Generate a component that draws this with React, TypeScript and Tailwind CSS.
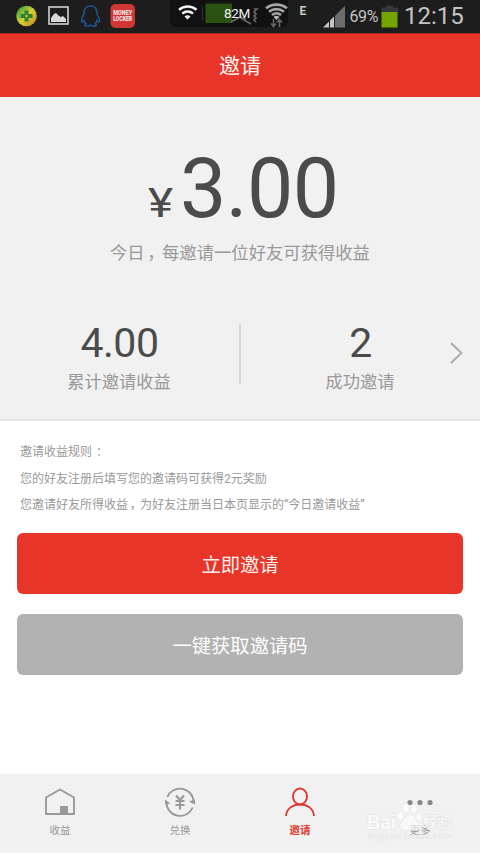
import type { ReactNode } from "react";
import clsx from "clsx";

const RULES = [
  <>邀请收益规则<span className="relative left-[4px]">：</span></>,
  <>您的好友注册后填写您的邀请码可获得2元奖励</>,
  <>您邀请好友所得收益<Comma />为好友注册当日本页显示的“今日邀请收益”</>,
];

// full-width comma, nudged to the middle of its cell
function Comma() {
  return <span className="relative left-[0.15em]">，</span>;
}

function StatusBar() {
  return (
    <div className="relative flex h-[33px] shrink-0 items-center bg-[#1d1d1d] text-[#c4c4c4]">
      <svg width="480" height="33" viewBox="0 0 480 33" fill="none">
        <defs>
          <linearGradient id="ball" x1="0" y1="0" x2="1" y2="1">
            <stop offset="0.2" stopColor="#5fae35" />
            <stop offset="0.5" stopColor="#d9cf35" />
            <stop offset="0.85" stopColor="#c99a22" />
          </linearGradient>
        </defs>
        {/* security */}
        <circle cx="26.5" cy="16" r="10.3" fill="url(#ball)" />
        <path d="M24.500 10.500h4v3.500h4v4h-4v3.500h-4v-3.500h-4v-4h4z" fill="#2f8132" />
        <path d="M26.500 14.500v3M25 16h3" stroke="#cfc63a" strokeWidth="1.200" />
        {/* gallery */}
        <rect x="49" y="7" width="19" height="17" stroke="#d2d2d2" strokeWidth="1.6" />
        <path d="M51 22v-4l3-4 2-1 3 3 2 1 2-1 3 3v3z" fill="#d8d8d8" />
        {/* qq */}
        <path
          d="M90.500 6c-4 0-6.300 2.800-6.300 6.500 0 2.500-2.700 5-2.700 8.500 0 1.500 1 1.500 2.500-.5.300 1.500 1 2.300 1.800 3-2 1-1.500 2.700 1.200 2.700 1.500 0 2.500-.4 3.500-1 1 .6 2 1 3.500 1 2.700 0 3.200-1.700 1.200-2.700.8-.7 1.500-1.500 1.800-3 1.500 2 2.500 2 2.500.5 0-3.500-2.700-6-2.700-8.500C96.800 8.800 94.500 6 90.500 6z"
          stroke="#1f5792"
          strokeWidth="1.500"
        />
        {/* money locker */}
        <rect x="110.500" y="4" width="24.500" height="24" rx="5" fill="#cf3634" />
        <text x="122.700" y="15.300" textAnchor="middle" textLength="19" lengthAdjust="spacingAndGlyphs" fill="#f5e4e2" fontFamily="Roboto, sans-serif" fontWeight="900" fontSize="6.500">MONEY</text>
        <text x="122.700" y="21" textAnchor="middle" textLength="19" lengthAdjust="spacingAndGlyphs" fill="#f5e4e2" fontFamily="Roboto, sans-serif" fontWeight="900" fontSize="6.500">LOCKER</text>
        {/* floating memory widget */}
        <rect x="170" y="-6" width="118" height="33" rx="5" fill="#111111" />
        <g stroke="#f2f2f2" strokeWidth="2.500">
          <path d="M179 9.800a13 13 0 0 1 17.500 0" />
          <path d="M182.300 13.600a8 8 0 0 1 10.700 0" />
        </g>
        <path d="M187.500 19.500l-3-3a4.500 4.500 0 0 1 6 0z" fill="#f2f2f2" />
        <path d="M202.500 6v15" stroke="#303030" />
        <rect x="205.500" y="3.500" width="26.500" height="19.500" fill="#2b5210" />
        <path d="M231 22l9-5 4 3 7 4M240 17l6 2M254 8l2 2-2 2 2 2-2 2 2 2-2 2 2 2M258 8l-2 2" stroke="#686868" strokeWidth="1.700" />
        {/* wifi with traffic arrows */}
        <g stroke="#a5a5a5" strokeWidth="2.700">
          <path d="M266 8.300a17 17 0 0 1 21 0" />
          <path d="M269 11.800a12 12 0 0 1 15 0" />
          <path d="M272 15a7 7 0 0 1 9 0" />
        </g>
        <path d="M276.500 20l-3-3a4.500 4.500 0 0 1 6 0z" fill="#b5b5b5" />
        <path d="M273.500 19v7M271 23.500l2.500 3 2.500-3M279.500 27v-7M277 22.500l2.500-3 2.500 3" stroke="#666" strokeWidth="1.600" />
        {/* signal */}
        <path d="M323 27.500l6-6v6zM330 27.500v-7l4-4v11z" fill="#c6c6c6" />
        <path d="M335 27.500V15.800l10-10v21.700z" fill="#6c6c6c" />
        {/* battery */}
        <path d="M386 5.500h7v2h5v5h-16.500v-5h4.500z" fill="#37373b" />
        <rect x="381.500" y="12" width="16" height="15.500" fill="#74a400" />
      </svg>
      <span className="absolute left-[224px] top-[4px] text-[13.500px] leading-[19px] tracking-[-0.3px] text-[#f0f0f0]">82M</span>
      <span className="absolute left-[299.500px] top-[2px] text-[12px] font-bold leading-[18px] text-[#c8c8c8]">E</span>
      <span className="absolute left-[349.500px] top-[6px] text-[16px] leading-[21px] tracking-[-0.4px]">69%</span>
      <span className="absolute left-[404px] top-0 text-[24px] leading-[32px]">12:15</span>
    </div>
  );
}

function Stat({ value, label }: { value: string; label: string }) {
  return (
    <div className="flex w-[239px] flex-col items-center">
      <span className="-mt-[3px] text-[41px] leading-[48px] tracking-[-0.5px] text-[#4b4b4b]">{value}</span>
      <span className="mt-[2px] pr-[1px] text-[17.300px] leading-[26px] text-[#999]">{label}</span>
    </div>
  );
}

function Tab({ label, active, children }: { label: string; active?: boolean; children: ReactNode }) {
  return (
    <button className={clsx("flex flex-1 flex-col items-center pt-[11px]", active ? "font-bold text-[#de3a31]" : "text-[#999]")}>
      <svg width="34" height="34" viewBox="0 0 34 34" fill="none" stroke="currentColor" strokeWidth="1.900">
        {children}
      </svg>
      <span className="mt-[3px] text-[10.500px] leading-[17px]">{label}</span>
    </button>
  );
}

function Watermark() {
  return (
    <svg className="absolute left-[365px] top-[22px]" width="94" height="48" viewBox="0 0 94 48">
      <g fill="#ffffff" fillOpacity="0.8" stroke="#e0e0e0" strokeWidth="0.800" paintOrder="stroke">
        <text x="2" y="33" fontFamily="Liberation Sans, sans-serif" fontWeight="700" fontSize="21" textLength="29" lengthAdjust="spacingAndGlyphs">Bai</text>
        <ellipse cx="35.500" cy="20" rx="3" ry="4" />
        <ellipse cx="41" cy="12" rx="3" ry="4.500" />
        <ellipse cx="49" cy="12.500" rx="3" ry="4.500" />
        <ellipse cx="54" cy="21" rx="2.800" ry="4" />
        <path d="M45 19c-4 0-5 5-8 7-4 3-2 8 2 8h12c4 0 6-5 2-8-3-2-4-7-8-7z" fillOpacity="0.600" />
        <text x="58" y="31" fontFamily="Noto Sans CJK SC, sans-serif" fontWeight="500" fontSize="15" textLength="29" lengthAdjust="spacingAndGlyphs">经验</text>
      </g>
      <text x="3" y="43" fill="#e6e6e6" fontFamily="Liberation Sans, sans-serif" fontSize="9.500" textLength="84">jingyan.baidu.com</text>
    </svg>
  );
}

export default function App() {
  return (
    <div className="flex h-[853px] w-[480px] flex-col overflow-hidden bg-white font-['Roboto','Noto_Sans_CJK_SC',sans-serif]">
      <StatusBar />

      {/* Header */}
      <header className="flex h-[64px] shrink-0 items-center justify-center border-t border-[#a82a20] bg-[#e83529] pt-[2px] text-[21px] text-[#fff3f0]">
        邀请
      </header>

      {/* Earnings */}
      <section className="flex h-[324px] shrink-0 flex-col items-center border-b-2 border-[#e4e4e4] bg-[#f1f1f1]">
        <div className="mt-[43px] flex h-[98px] items-baseline pl-[6px] text-[#4b4b4b]">
          <span className="mr-[11px] origin-left scale-x-[1.17] text-[41px]">¥</span>
          <span className="text-[82.500px] leading-[98px] tracking-[-0.6px]">3.00</span>
        </div>
        <p className="mt-[2px] text-[17.330px] leading-[26px] text-[#999]">
          今日<Comma />每邀请一位好友可获得收益
        </p>
        <div className="relative mt-[56px] flex">
          <Stat value="4.00" label="累计邀请收益" />
          <div className="mt-[2px] h-[60px] w-[2px] bg-[#d6d6d6]" />
          <Stat value="2" label="成功邀请" />
          <svg className="absolute right-[16px] top-[19px]" width="16" height="24" viewBox="0 0 16 24" fill="none" stroke="#aaa" strokeWidth="1.800">
            <path d="M3 2l10.500 10L3 22" />
          </svg>
        </div>
      </section>

      {/* Rules */}
      <section className="flex flex-col px-[20px] pt-[17px]">
        {RULES.map((rule, i) => (
          <p key={i} className="h-[26.700px] whitespace-nowrap text-[12px] leading-[28px] text-[#999]">{rule}</p>
        ))}
      </section>

      {/* Actions */}
      <div className="mt-[15px] flex flex-col gap-[20px] px-[17px] text-[19.300px]">
        <button className="h-[61px] rounded-[6px] bg-[#e83529] pt-[5px] text-[#fff3f0]">立即邀请</button>
        <button className="h-[61px] rounded-[6px] bg-[#b2b2b2] pt-[5px] text-white">一键获取邀请码</button>
      </div>

      {/* Tab bar */}
      <nav className="relative mt-auto flex h-[79px] shrink-0 items-start bg-[#f1f1f1]">
        <Tab label="收益">
          <path d="M3 12.500L17 4.500l14 8v16.500H3z" strokeLinejoin="round" />
          <path d="M17 21h8v8h-8z" fill="currentColor" stroke="none" />
        </Tab>
        <Tab label="兑换">
          <path d="M4.300 12a13.700 13.700 0 0 1 26.300 5M29.700 22.500a13.700 13.700 0 0 1-26.300-5" />
          <path d="M2 14.500l5.500 4-5.500 1zM32 19.500l-6-3 6-2z" fill="currentColor" stroke="none" />
          <path d="M13 10.500l4 4.500 4-4.500M12.500 16h9M12.500 20h9M17 15v9.500" strokeWidth="2.200" />
        </Tab>
        <Tab label="邀请" active>
          <ellipse cx="17" cy="11.500" rx="7" ry="8" />
          <path d="M3 31c.5-7 6-11.500 14-11.500S30.500 24 31 31" />
        </Tab>
        <Tab label="更多">
          <g fill="#888" stroke="none">
            <circle cx="7" cy="17.500" r="2.600" />
            <circle cx="17" cy="17.500" r="2.600" />
            <circle cx="27" cy="17.500" r="2.600" />
          </g>
        </Tab>
        <Watermark />
      </nav>
    </div>
  );
}
